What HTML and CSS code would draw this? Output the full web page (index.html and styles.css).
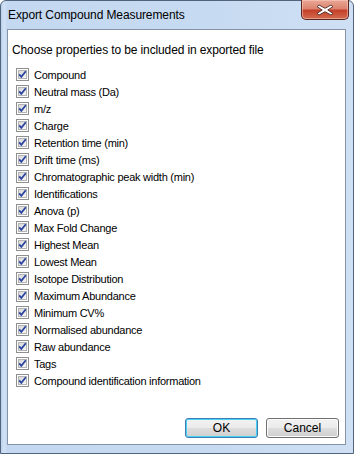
FILE: index.html
```html
<!DOCTYPE html>
<html lang="en">
<head>
    <meta charset="UTF-8">
    <title>Export Compound Measurements</title>
    <link rel="stylesheet" href="styles.css">
</head>
<body>
    <svg class="defs" width="0" height="0">
        <defs>
            <linearGradient id="boxfill" x1="0" y1="0" x2="1" y2="1">
                <stop offset="0" stop-color="#d6d6d6"/>
                <stop offset="1" stop-color="#f8f8f8"/>
            </linearGradient>
            <symbol id="chk" viewBox="0 0 13 13">
                <rect x="0.5" y="0.5" width="12" height="12" fill="#fff" stroke="#8e8f8f"/>
                <rect x="2.5" y="2.5" width="8" height="8" fill="url(#boxfill)" stroke="#b4b4b4"/>
                <path d="M3.2 6.4 L5.3 8.8 L9.8 3.2" fill="none" stroke="#2a44a0" stroke-width="1.8"/>
            </symbol>
        </defs>
    </svg>

    <div class="window">
        <div class="titlebar">
            <span class="title">Export Compound Measurements</span>
            <div class="close">
                <svg width="18" height="12" viewBox="0 0 18 12">
                    <path d="M3 1 L9 4.3 L15 1 L17 2.6 L11.8 6 L17 9.4 L15 11 L9 7.7 L3 11 L1 9.4 L6.2 6 L1 2.6 Z" fill="#fff" stroke="#4d2a26" stroke-width="0.9" stroke-linejoin="round"/>
                </svg>
            </div>
        </div>

        <div class="client">
            <p class="heading">Choose properties to be included in exported file</p>

            <ul class="props">
                <li><svg class="box"><use href="#chk"/></svg>Compound</li>
                <li><svg class="box"><use href="#chk"/></svg>Neutral mass (Da)</li>
                <li><svg class="box"><use href="#chk"/></svg>m/z</li>
                <li><svg class="box"><use href="#chk"/></svg>Charge</li>
                <li><svg class="box"><use href="#chk"/></svg>Retention time (min)</li>
                <li><svg class="box"><use href="#chk"/></svg>Drift time (ms)</li>
                <li><svg class="box"><use href="#chk"/></svg>Chromatographic peak width (min)</li>
                <li><svg class="box"><use href="#chk"/></svg>Identifications</li>
                <li><svg class="box"><use href="#chk"/></svg>Anova (p)</li>
                <li><svg class="box"><use href="#chk"/></svg>Max Fold Change</li>
                <li><svg class="box"><use href="#chk"/></svg>Highest Mean</li>
                <li><svg class="box"><use href="#chk"/></svg>Lowest Mean</li>
                <li><svg class="box"><use href="#chk"/></svg>Isotope Distribution</li>
                <li><svg class="box"><use href="#chk"/></svg>Maximum Abundance</li>
                <li><svg class="box"><use href="#chk"/></svg>Minimum CV%</li>
                <li><svg class="box"><use href="#chk"/></svg>Normalised abundance</li>
                <li><svg class="box"><use href="#chk"/></svg>Raw abundance</li>
                <li><svg class="box"><use href="#chk"/></svg>Tags</li>
                <li><svg class="box"><use href="#chk"/></svg>Compound identification information</li>
            </ul>

            <div class="buttons">
                <button class="btn default">OK</button>
                <button class="btn">Cancel</button>
            </div>
        </div>
    </div>
</body>
</html>
```

FILE: styles.css
```css
body {
    margin: 0;
    padding: 0;
    font-family: "Liberation Sans", Arial, sans-serif;
    font-size: 12px;
    color: #000;
    background: #fff;
}

.defs {
    position: absolute;
}

/* Aero style window frame */
.window {
    width: 354px;
    height: 454px;
    box-sizing: border-box;
    border: 1px solid #52647c;
    border-radius: 6px 6px 0 0;
    background: linear-gradient(to right, #b9d1ec 0px, #d2e2f5 3px, #c4d9f1 6px, #c6daf1 60%, #cfe0f4 100%);
    display: flex;
    flex-direction: column;
}

.titlebar {
    height: 28px;
    display: flex;
    justify-content: space-between;
    padding: 0 4px 0 7px;
}

.title {
    line-height: 28px;
    font-size: 12px;
    letter-spacing: -0.1px;
}

.close {
    width: 46px;
    height: 19px;
    margin-top: -1px;
    border: 1px solid #5a2620;
    border-top: none;
    border-radius: 0 0 5px 5px;
    background: linear-gradient(to bottom, #e9a896 0%, #dc8470 45%, #c5402a 55%, #d26b4f 100%);
    box-shadow: inset 0 0 0 1px rgba(255, 210, 200, 0.5);
    display: flex;
    align-items: center;
    justify-content: center;
}

/* White client area */
.client {
    flex: 1;
    margin: 0 7px 8px 6px;
    background: #fff;
    border: 1px solid #8593a6;
    display: flex;
    flex-direction: column;
}

.heading {
    margin: 12px 0 0 4px;
    line-height: 17px;
    letter-spacing: -0.12px;
}

.props {
    list-style: none;
    margin: 7px 0 0 8px;
    padding: 0;
    font-size: 11px;
    letter-spacing: -0.25px;
}

.props li {
    height: 17px;
    display: flex;
    align-items: center;
    gap: 5px;
}

.box {
    width: 13px;
    height: 13px;
    flex-shrink: 0;
}

.buttons {
    margin-top: auto;
    display: flex;
    justify-content: flex-end;
    gap: 8px;
    padding: 0 6px 6px 0;
}

.btn {
    width: 73px;
    height: 20px;
    padding: 0;
    font-family: "Liberation Sans", Arial, sans-serif;
    font-size: 12px;
    color: #000;
    border: 1px solid #707070;
    border-radius: 3px;
    background: linear-gradient(to bottom, #f2f2f2 0%, #ebebeb 48%, #dddddd 52%, #cfcfcf 100%);
    box-shadow: inset 0 0 0 1px #fcfcfc;
}

.btn.default {
    border-color: #3c7fb1;
    box-shadow: inset 0 0 0 1px #48d0f8;
}
```
